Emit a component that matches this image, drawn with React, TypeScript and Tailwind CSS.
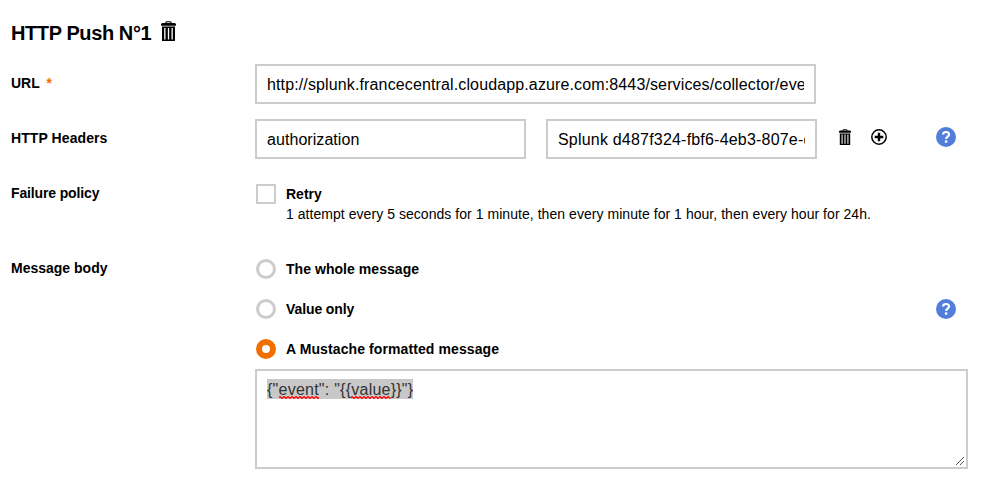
import React from "react";

function Trash({ className }: { className: string }) {
  return (
    <svg viewBox="0 0 15 20" className={className} fill="#000" preserveAspectRatio="none">
      <path d="M4.500 2V1.300Q4.500 .2 5.800 .2h3.400q1.300 0 1.300 1.100V2h3q1.500 0 1.500 1.500V4.800H0V3.500Q0 2 1.500 2zM5.700 1.200V2h3.600v-.8z" fillRule="evenodd" />
      <path d="M1 5.500h13V20H1zM3.200 7V18.500h1.300V7zM6.850 7V18.500h1.300V7zM10.500 7V18.500h1.300V7z" fillRule="evenodd" />
    </svg>
  );
}

function Plus() {
  return (
    <svg viewBox="0 0 16 16" className="h-4 w-4 shrink-0" fill="none" stroke="#000">
      <circle cx="8" cy="8" r="7.200" strokeWidth="1.500" />
      <path d="M8 3.700v8.600M3.700 8h8.600" strokeWidth="2.400" />
    </svg>
  );
}

function Help() {
  return (
    <svg viewBox="0 0 20 20" className="block h-5 w-5 shrink-0">
      <circle cx="10" cy="10" r="10" fill="#527edb" />
      <path d="M7 7.500C7.200 5.700 8.400 5 10 5c1.800 0 3 .9 3 2.400 0 2.200-2.900 2.300-2.900 4.700" fill="none" stroke="#fff" strokeWidth="2.200" />
      <rect x="8.900" y="13.400" width="2.400" height="2.300" fill="#fff" />
    </svg>
  );
}

function Squiggle({ id }: { id: string }) {
  return (
    <svg className="absolute top-[15px] left-0 h-[3px] w-full">
      <pattern id={id} width="4" height="3" patternUnits="userSpaceOnUse">
        <path d="M-1 2.500L1 .5L3 2.500L5 .5" fill="none" stroke="#f00" strokeWidth="1.200" />
      </pattern>
      <rect width="100%" height="3" fill={`url(#${id})`} />
    </svg>
  );
}

function Label({ children, className = "" }: { children: React.ReactNode; className?: string }) {
  return <div className={"w-[244px] shrink-0 text-sm leading-5 font-bold " + className}>{children}</div>;
}

function Field({ text, className }: { text: string; className: string }) {
  return (
    <div className={"h-10 shrink-0 border-2 border-[#ccc] px-[10px] " + className}>
      <div className="overflow-hidden pt-px text-base leading-[35px] whitespace-nowrap">{text}</div>
    </div>
  );
}

function Radio({ text, tracking, checked = false }: { text: string; tracking: string; checked?: boolean }) {
  return (
    <div className="flex h-5 items-center pl-px">
      <span className={"h-5 w-5 rounded-full " + (checked ? "border-[6px] border-[#f16e00]" : "border-[3px] border-[#ccc]")} />
      <span className={"ml-[10px] text-sm leading-5 font-bold " + tracking}>{text}</span>
    </div>
  );
}

export default function App() {
  return (
    <main className="h-[482px] w-[982px] overflow-hidden bg-white pl-[11px] font-['Liberation_Sans',Arial,sans-serif] text-black">
      <h1 className="flex h-16 items-start pt-[21px] text-xl leading-6 font-bold">
        <span className="w-[150px] tracking-[-0.4px] whitespace-nowrap">HTTP Push N°1</span>
        <Trash className="h-5 w-[15px]" />
      </h1>
      <div className="flex h-[55px]">
        <div className="pt-[9px]"><Label>URL <span className="ml-[3px] text-[#f16e00]">*</span></Label></div>
        <Field className="w-[561px] tracking-[0.13px]" text="http://splunk.francecentral.cloudapp.azure.com:8443/services/collector/eve" />
      </div>
      <div className="flex h-[65px]">
        <div className="pt-[9px]"><Label className="tracking-[0.08px]">HTTP Headers</Label></div>
        <Field className="w-[271px] tracking-[0.06px]" text="authorization" />
        <Field className="ml-5 w-[271px] tracking-[0.2px]" text="Splunk d487f324-fbf6-4eb3-807e-d" />
        <div className="ml-[22px] flex h-9 items-center">
          <Trash className="h-4 w-3" />
          <span className="ml-5"><Plus /></span>
          <span className="ml-[49px]"><Help /></span>
        </div>
      </div>
      <div className="flex h-[75px]">
        <div className="-mt-px"><Label className="tracking-[-0.14px]">Failure policy</Label></div>
        <div className="flex pl-px">
          <span className="h-5 w-5 border-2 border-[#ccc]" />
          <div className="ml-[10px] text-sm leading-5">
            <div className="font-bold">Retry</div>
            <div className="tracking-[0.047px] whitespace-nowrap">1 attempt every 5 seconds for 1 minute, then every minute for 1 hour, then every hour for 24h.</div>
          </div>
        </div>
      </div>
      <div className="flex">
        <div className="-mt-px"><Label>Message body</Label></div>
        <div className="w-[713px]">
          <div className="flex flex-col gap-5">
            <Radio text="The whole message" tracking="tracking-[0.05px]" />
            <div className="flex items-center justify-between pr-3"><Radio text="Value only" tracking="tracking-[-0.1px]" /><span className="-mt-px"><Help /></span></div>
            <Radio text="A Mustache formatted message" tracking="tracking-[0.1px]" checked />
          </div>
          <div className="relative mt-[10px] h-[100px] border-2 border-[#ccc] px-[10px] pt-2">
            <div className="text-base leading-5 tracking-[0.24px] whitespace-nowrap text-[#333]">
              <span className="inline-block h-5 bg-[#c8c8c8]"><span className="relative top-px">{'{"'}<span className="relative">event<Squiggle id="wave-event" /></span>{'": "{{'}<span className="relative">value<Squiggle id="wave-value" /></span>{'}}"}'}</span></span>
            </div>
            <svg className="absolute right-px bottom-px h-[10px] w-[10px]" viewBox="0 0 10 10" stroke="#555"><path d="M1 9L9 1M5 9L9 5" /></svg>
          </div>
        </div>
      </div>
    </main>
  );
}
